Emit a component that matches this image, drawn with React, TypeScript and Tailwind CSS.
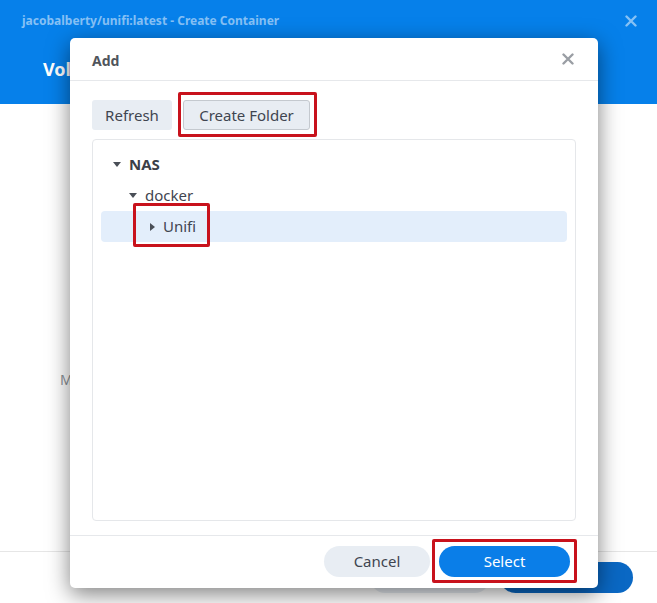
import React from "react";

type Node = { label: string; level: number; open: boolean; bold?: boolean; selected?: boolean; marked?: boolean };

const tree: Node[] = [
  { label: "NAS", level: 0, open: true, bold: true },
  { label: "docker", level: 1, open: true },
  { label: "Unifi", level: 2, open: false, selected: true, marked: true },
];

function Caret({ open }: { open: boolean }) {
  return open ? (
    <svg width="8" height="5" viewBox="0 0 8 5" className="shrink-0">
      <path d="M0 0h8L4 5z" fill="#4a4f57" />
    </svg>
  ) : (
    <svg width="5" height="8" viewBox="0 0 5 8" className="shrink-0">
      <path d="M0 0v8l5-4z" fill="#4a4f57" />
    </svg>
  );
}

function CloseX({ className }: { className: string }) {
  return (
    <svg width="12" height="12" viewBox="0 0 12 12" className={className}>
      <path d="M1.5 1.5l9 9M10.5 1.5l-9 9" stroke="currentColor" strokeWidth="2.4" strokeLinecap="round" />
    </svg>
  );
}

function TreeRow({ node }: { node: Node }) {
  const pad = ["pl-[12px]", "pl-[28px]", "pl-[49px]"][node.level];
  return (
    <div
      className={`h-[31px] flex items-center rounded ${pad} ${node.selected ? "bg-[#e3eefb]" : ""}`}
    >
      <span className="relative flex items-center gap-[8px]">
        {node.marked && (
          <span className="absolute left-[-17px] top-[-12px] w-[77px] h-[44px] border-[3px] border-[#c8121c] rounded-[2px]" />
        )}
        <span className={`flex items-center ${node.open ? "w-[8px]" : "w-[5px]"}`}>
          <Caret open={node.open} />
        </span>
        <span className={`text-[15px] ${node.bold ? "font-bold text-[#3b4048]" : "text-[#3f4550]"}`}>
          {node.label}
        </span>
      </span>
    </div>
  );
}

export default function App() {
  return (
    <div className="relative w-[657px] h-[603px] overflow-hidden bg-white font-['Noto_Sans',sans-serif]">
      {/* page behind the dialog */}
      <div className="flex flex-col h-full">
        <header className="h-[104px] bg-[#0680ea] flex flex-col">
          <div className="h-[42px] px-[22px] flex items-center justify-between">
            <span className="text-[12px] font-bold text-[#86c1f5]">
              jacobalberty/unifi:latest - Create Container
            </span>
            <CloseX className="text-[#86c1f5] mr-[-2px]" />
          </div>
          <h1 className="px-[43px] pt-[14px] text-[18px] font-bold text-white">Volume Settings</h1>
        </header>
        <main className="flex-1 flex items-center justify-between px-[60px] pt-[104px]">
          <span className="text-[14px] text-[#8a8f96]">Mount path</span>
          <span className="text-[14px] text-[#8a8f96]">:</span>
        </main>
        <footer className="h-[52px] border-t border-[#e6e6e6] flex items-start justify-end gap-[10px] pt-[10px] pr-[24px]">
          <button className="w-[120px] h-[31px] rounded-full bg-[#e8edf3] text-[15px] text-[#3f4550]">Back</button>
          <button className="w-[133px] h-[31px] rounded-full bg-[#0a68c4] text-[15px] text-white">Next</button>
        </footer>
      </div>

      {/* Add dialog */}
      <div className="absolute left-[70px] top-[38px] w-[528px] h-[550px] bg-white rounded-[5px] shadow-[0_6px_22px_rgba(0,0,0,0.5)] flex flex-col">
        <div className="h-[43px] px-[22px] flex items-center justify-between border-b border-[#e6e8eb]">
          <span className="text-[14px] font-bold text-[#50555c] pt-[2px]">Add</span>
          <CloseX className="text-[#9a9ea4] mr-[2px]" />
        </div>

        <div className="px-[22px] pt-[19px] flex flex-col">
          <div className="flex gap-[11px] h-[30px]">
            <button className="w-[80px] h-[30px] rounded-[3px] bg-[#e8edf3] text-[15px] text-[#3f4550]">Refresh</button>
            <span className="relative">
              <span className="absolute left-[-5px] top-[-8px] w-[139px] h-[45px] border-[3px] border-[#c8121c] rounded-[2px]" />
              <button className="relative w-[127px] h-[30px] rounded-[3px] bg-[#e8edf3] border border-[#c4c9cf] text-[15px] text-[#3f4550]">
                Create Folder
              </button>
            </span>
          </div>

          <div className="mt-[9px] w-[484px] h-[382px] border border-[#e5e7ea] rounded-[4px] px-[8px] pt-[9px]">
            {tree.map((n) => (
              <TreeRow key={n.label} node={n} />
            ))}
          </div>
        </div>

        <div className="mt-[14px] flex-1 border-t border-[#e6e8eb] flex items-start justify-end gap-[9px] pt-[10px] pr-[28px]">
          <button className="w-[106px] h-[31px] rounded-full bg-[#e8edf3] text-[15px] text-[#3f4550]">Cancel</button>
          <span className="relative">
            <span className="absolute left-[-7px] top-[-7px] w-[145px] h-[44px] border-[3px] border-[#c8121c] rounded-[2px]" />
            <button className="relative w-[131px] h-[31px] rounded-full bg-[#0a7ee8] text-[15px] text-white">Select</button>
          </span>
        </div>
      </div>
    </div>
  );
}
